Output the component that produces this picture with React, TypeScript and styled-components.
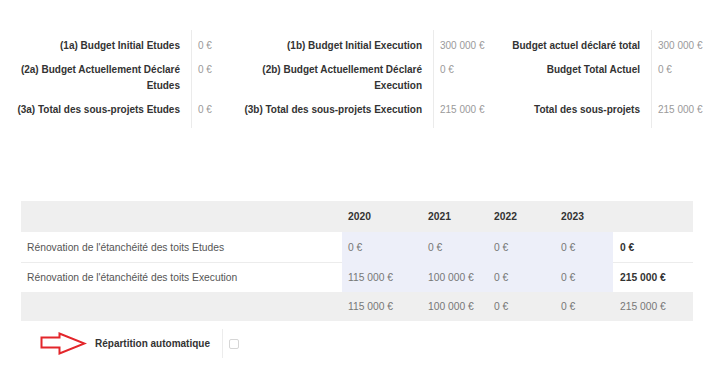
import styled, { createGlobalStyle } from 'styled-components';

const GlobalStyle = createGlobalStyle`
  body {
    margin: 0;
    background: #ffffff;
    font-family: "Liberation Sans", Arial, sans-serif;
    font-size: 10px;
  }
`;

const budgetRows = [
  [
    { label: '(1a) Budget Initial Etudes', value: '0 €' },
    { label: '(1b) Budget Initial Execution', value: '300 000 €' },
    { label: 'Budget actuel déclaré total', value: '300 000 €' },
  ],
  [
    { label: '(2a) Budget Actuellement Déclaré Etudes', value: '0 €' },
    { label: '(2b) Budget Actuellement Déclaré Execution', value: '0 €' },
    { label: 'Budget Total Actuel', value: '0 €' },
  ],
  [
    { label: '(3a) Total des sous-projets Etudes', value: '0 €' },
    { label: '(3b) Total des sous-projets Execution', value: '215 000 €' },
    { label: 'Total des sous-projets', value: '215 000 €' },
  ],
];

const years = ['2020', '2021', '2022', '2023'];

const lines = [
  { name: "Rénovation de l'étanchéité des toits Etudes", values: ['0 €', '0 €', '0 €', '0 €'], total: '0 €' },
  { name: "Rénovation de l'étanchéité des toits Execution", values: ['115 000 €', '100 000 €', '0 €', '0 €'], total: '215 000 €' },
];

const footer = { values: ['115 000 €', '100 000 €', '0 €', '0 €'], total: '215 000 €' };

const App = () => {
  return (
    <>
      <GlobalStyle />
      <Page>
        <Summary>
          {budgetRows.map((row, r) =>
            row.map((item, c) => (
              <Pair key={`${r}-${c}`}>
                <Label>{item.label}</Label>
                <Value $first={r === 0} $last={r === budgetRows.length - 1}>{item.value}</Value>
              </Pair>
            ))
          )}
        </Summary>

        <Table>
          <colgroup>
            <col style={{ width: 321 }} />
            <col style={{ width: 80 }} />
            <col style={{ width: 66 }} />
            <col style={{ width: 67 }} />
            <col style={{ width: 58 }} />
            <col style={{ width: 80 }} />
          </colgroup>
          <thead>
            <tr>
              <HeadCell />
              {years.map(y => <HeadCell key={y}>{y}</HeadCell>)}
              <HeadCell />
            </tr>
          </thead>
          <tbody>
            {lines.map((line, i) => (
              <tr key={i}>
                <NameCell $first={i === 0}>{line.name}</NameCell>
                {line.values.map((v, j) => <YearCell key={j} $first={i === 0}>{v}</YearCell>)}
                <TotalCell $first={i === 0}>{line.total}</TotalCell>
              </tr>
            ))}
            <tr>
              <FootCell />
              {footer.values.map((v, j) => <FootCell key={j}>{v}</FootCell>)}
              <FootCell $total>{footer.total}</FootCell>
            </tr>
          </tbody>
        </Table>

        <AutoRow>
          <svg width="47" height="23" viewBox="0 0 47 23">
            <polygon
              points="1.5,5.5 19.5,5.5 19.5,1.5 44.5,11.5 19.5,21.5 19.5,15.5 1.5,15.5"
              fill="none"
              stroke="#e3262b"
              strokeWidth="2"
              strokeLinejoin="miter"
            />
          </svg>
          <AutoLabel>Répartition automatique</AutoLabel>
          <Divider />
          <Check type="checkbox" />
        </AutoRow>
      </Page>
    </>
  );
};

const Page = styled.div`
  width: 720px;
  height: 383px;
  overflow: hidden;
  color: #333;
`;

const Summary = styled.div`
  display: grid;
  grid-template-columns: 191px 49px 193px 64px 154px 1fr;
  padding-top: 34px;
`;

const Pair = styled.div`
  display: contents;
`;

const Label = styled.div`
  text-align: right;
  font-weight: bold;
  color: #333;
  line-height: 16px;
  padding: 4px 11px 4px 0;
`;

const Value = styled.div<{ $first?: boolean; $last?: boolean }>`
  border-left: 1px solid #ebebeb;
  color: #9a9a9a;
  line-height: 16px;
  padding: ${({ $first, $last }) => `${$first ? 8 : 4}px 0 ${$last ? 10 : 4}px 6px`};
  margin-top: ${({ $first }) => ($first ? '-4px' : '0')};
  white-space: nowrap;
`;

const Table = styled.table`
  margin: 73px 0 0 21px;
  width: 672px;
  table-layout: fixed;
  border-collapse: collapse;
  font-size: 10.3px;
`;

const HeadCell = styled.th`
  background: #efefef;
  height: 31px;
  padding: 0 6px;
  text-align: left;
  font-weight: bold;
  color: #333;
`;

const NameCell = styled.td<{ $first?: boolean }>`
  background: #fff;
  height: ${({ $first }) => ($first ? '30px' : '29px')};
  padding: 0 6px;
  color: #555;
  border-top: ${({ $first }) => ($first ? 'none' : '1px solid #ececec')};
  white-space: nowrap;
`;

const YearCell = styled.td<{ $first?: boolean }>`
  background: #edeff9;
  height: ${({ $first }) => ($first ? '30px' : '29px')};
  padding: 0 6px;
  color: #777;
  border-top: ${({ $first }) => ($first ? 'none' : '1px solid #edeff9')};
  white-space: nowrap;
`;

const TotalCell = styled.td<{ $first?: boolean }>`
  background: #fff;
  height: ${({ $first }) => ($first ? '30px' : '29px')};
  padding: 0 7px;
  font-weight: bold;
  color: #333;
  border-top: ${({ $first }) => ($first ? 'none' : '1px solid #ececec')};
  white-space: nowrap;
`;

const FootCell = styled.td<{ $total?: boolean }>`
  background: #efefef;
  height: 29px;
  padding: ${({ $total }) => ($total ? '0 7px' : '0 6px')};
  color: #777;
  white-space: nowrap;
`;

const AutoRow = styled.div`
  display: flex;
  align-items: center;
  padding-left: 40px;
  margin-top: 8px;
`;

const AutoLabel = styled.div`
  font-weight: bold;
  color: #333;
  margin-left: 8px;
`;

const Divider = styled.div`
  width: 1px;
  height: 29px;
  background: #ececec;
  margin-left: 12px;
`;

const Check = styled.input`
  appearance: none;
  width: 10px;
  height: 10px;
  margin: 0 0 0 6px;
  border: 1px solid #d6d6d6;
  border-radius: 2px;
  background: #fff;
`;

export default App;
